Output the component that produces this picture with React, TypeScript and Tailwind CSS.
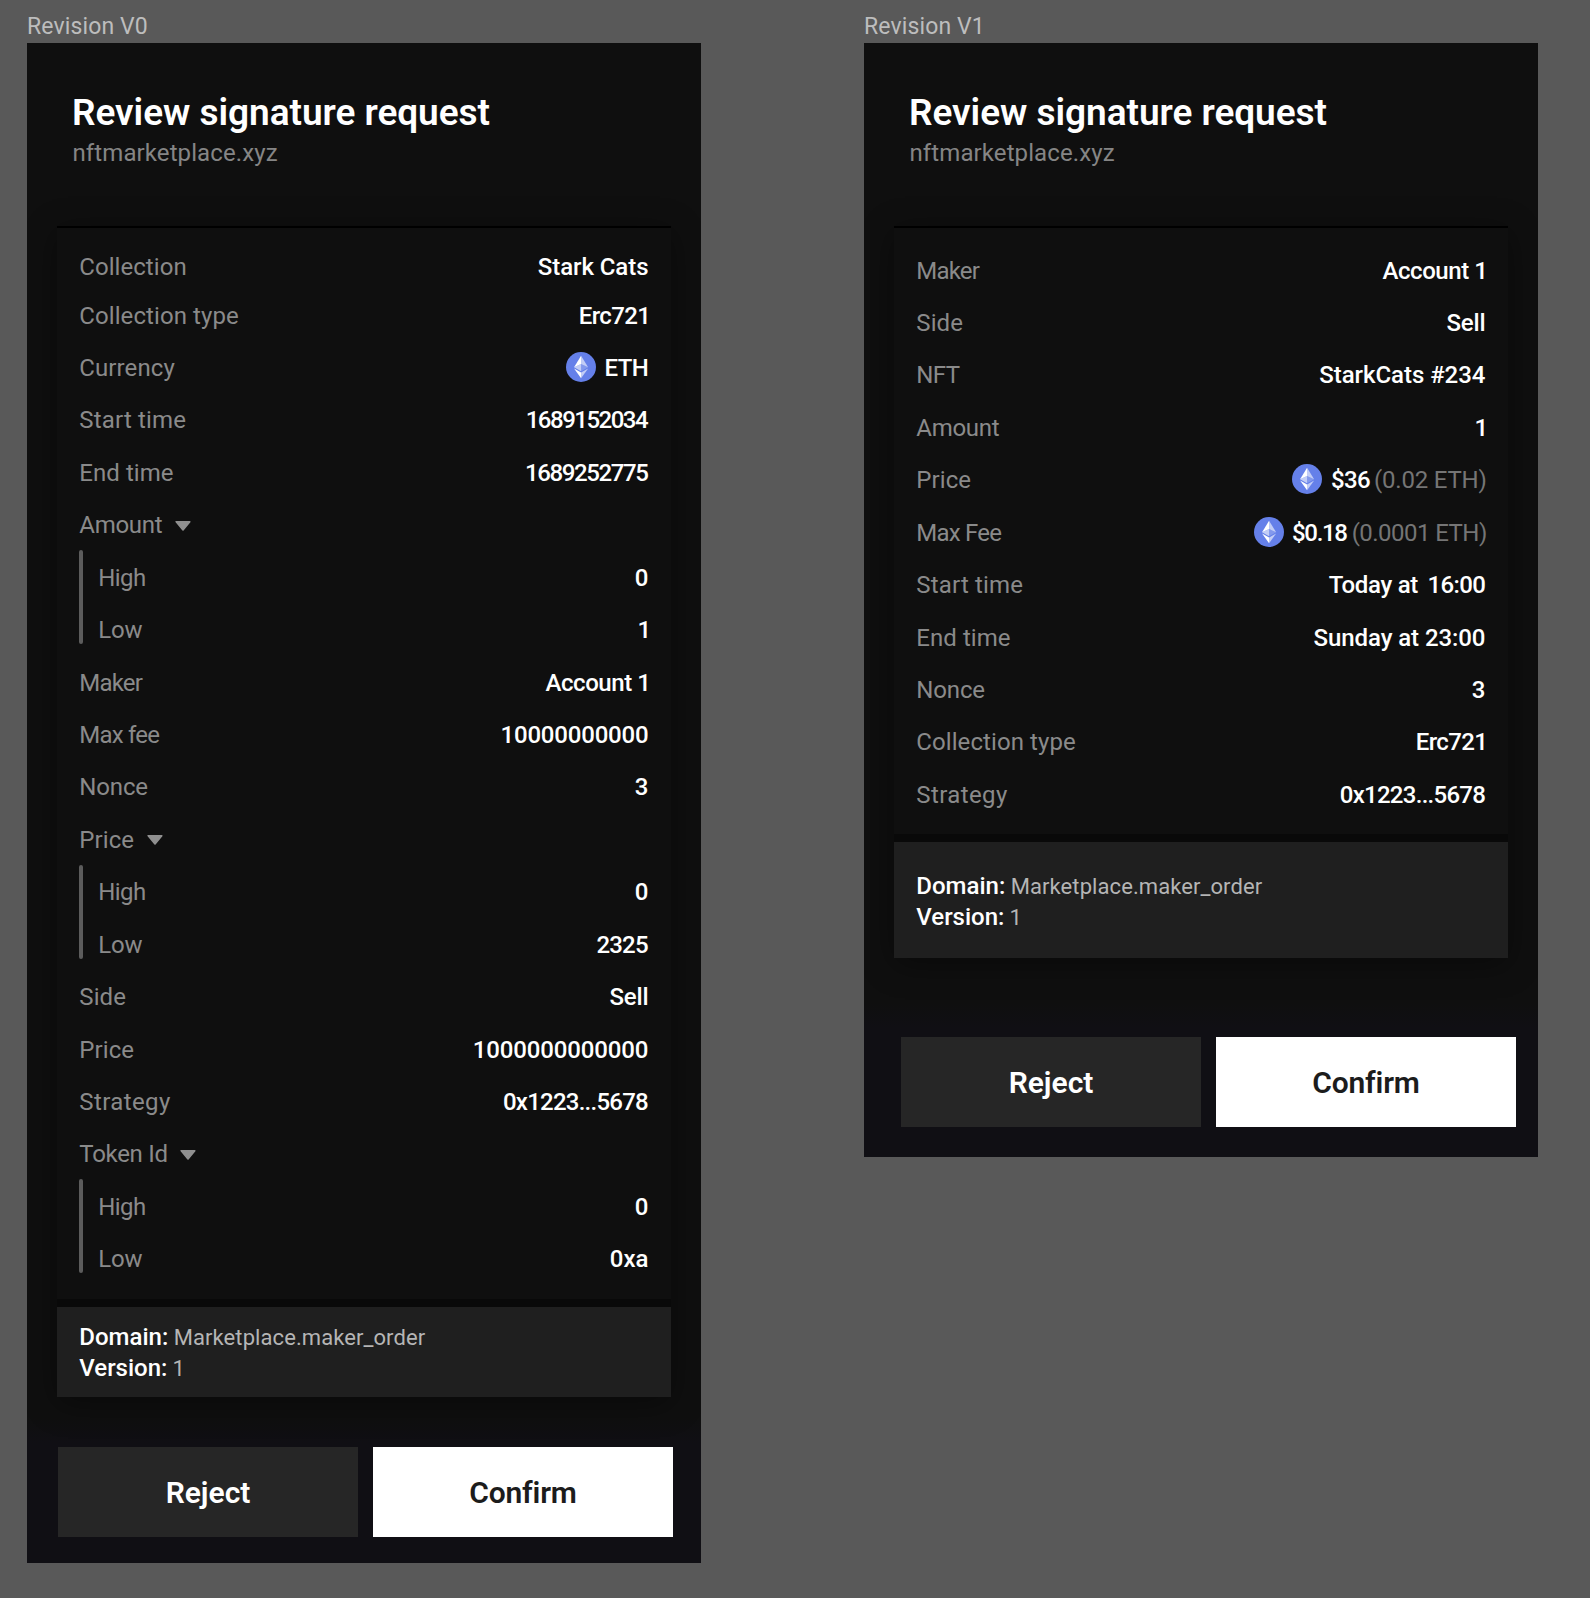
import type { ReactNode } from "react";

function EthIcon() {
  return (
    <svg viewBox="0 0 32 32" className="size-[30px] shrink-0 -translate-y-[1px]">
      <circle cx="16" cy="16" r="16" fill="#6580E9" />
      <g fill="#fff" transform="translate(-0.4 0)">
        <path fillOpacity=".602" d="M16.498 4v8.87l7.497 3.35z" />
        <path d="M16.498 4L9 16.22l7.498-3.35z" />
        <path fillOpacity=".602" d="M16.498 21.968v6.027L24 17.616z" />
        <path d="M16.498 27.995v-6.028L9 17.616z" />
        <path fillOpacity=".2" d="M16.498 20.573l7.497-4.353-7.497-3.348z" />
        <path fillOpacity=".602" d="M9 16.22l7.498 4.353v-7.701z" />
      </g>
    </svg>
  );
}

function Caret() {
  return (
    <svg viewBox="0 0 16 11" className="ml-[12.3px] h-[11px] w-4 translate-y-[0.5px]">
      <path
        d="M1.2 1.2h13.6L8 9.4z"
        fill="#8f8f8f"
        stroke="#8f8f8f"
        strokeWidth="1.6"
        strokeLinejoin="round"
      />
    </svg>
  );
}

type RowProps = {
  label: string;
  tracking?: string;
  height?: string;
  children?: ReactNode;
};

function Row({ label, tracking = "", height = "h-[52.43px]", children }: RowProps) {
  return (
    <div className={`flex items-center justify-between whitespace-pre ${height}`}>
      <span className={`text-[#8a8a8a] ${tracking}`}>{label}</span>
      <div className="flex items-center font-[470]">{children}</div>
    </div>
  );
}

function GroupTitle({ label, tracking }: { label: string; tracking: string }) {
  return (
    <div className="flex h-[52.43px] items-center text-[#8a8a8a]">
      <span className={tracking}>{label}</span>
      <Caret />
    </div>
  );
}

function Group({ high, low }: { high: ReactNode; low: ReactNode }) {
  return (
    <div className="flex">
      <div className="-mt-[1.4px] h-[94px] w-1 shrink-0 rounded-full bg-[#5c5c5c]" />
      <div className="ml-[15px] flex-1">
        <Row label="High" tracking="tracking-[-0.61px]">{high}</Row>
        <Row label="Low" tracking="tracking-[-0.2px]">{low}</Row>
      </div>
    </div>
  );
}

type CardProps = {
  name: string;
  cardHeight: string;
  panelHeight: string;
  domainBox: string;
  actions: string;
  footer: string;
  children: ReactNode;
};

function Card({ name, cardHeight, panelHeight, domainBox, actions, footer, children }: CardProps) {
  return (
    <section className="w-[674px] shrink-0">
      <div className="h-[43px] pt-[6.5px] text-[23px] leading-[40px] tracking-[0.12px] text-[#bdbdbd]">
        {name}
      </div>
      <div className={`flex flex-col overflow-hidden bg-[#0f0f0f] ${cardHeight} ${footer}`}>
        <header className="h-[183px] shrink-0 pl-[45px] pt-[50.4px] leading-[40px]">
          <h1 className="text-[37px] font-[580] leading-[40px] tracking-[-0.04px] text-white">
            Review signature request
          </h1>
          <p className="pl-[0.5px] text-[24px] tracking-[0.1px] text-[#858585]">nftmarketplace.xyz</p>
        </header>
        <div className="mx-[30px] flex w-[614px] shrink-0 flex-col gap-2 bg-[#090909] shadow-[0_6px_30px_rgba(0,0,0,0.4)]">
          <div
            className={`border-t-2 border-black bg-[#0f0f0f] pl-[22.3px] pr-[22.6px] pt-[16.4px] ${panelHeight}`}
          >
            {children}
          </div>
          <div className={`bg-[#1f1f1f] pl-[22.3px] leading-[30px] ${domainBox}`}>
            <div className="flex items-baseline">
              <span className="font-[470]">Domain:</span>
              <span className="ml-[5.5px] text-[22px] tracking-[0.08px] text-[#b5b5b5]">
                Marketplace.maker_order
              </span>
            </div>
            <div className="flex items-baseline">
              <span className="font-[470]">Version:</span>
              <span className="ml-[5px] text-[22px] text-[#b5b5b5]">1</span>
            </div>
          </div>
        </div>
        <div className={`flex shrink-0 gap-[15px] text-[30px] font-[580] ${actions}`}>
          <button className="h-[90px] w-[300px] bg-[#262626] pt-[2px] text-white">Reject</button>
          <button className="h-[90px] w-[300px] bg-white pt-[2px] tracking-[-0.2px] text-[#1c1c1c]">Confirm</button>
        </div>
      </div>
    </section>
  );
}

function RevisionV0() {
  return (
    <Card
      name="Revision V0"
      cardHeight="h-[1520px]"
      panelHeight="h-[1073px]"
      domainBox="h-[90px] pt-[15px]"
      actions="mt-[50px] ml-[31px]"
      footer="bg-[linear-gradient(to_bottom,transparent_1375px,#100f14_1400px)]"
    >
      <Row label="Collection" tracking="tracking-[0.05px]" height="h-[45px]">
        <span className="tracking-[-0.08px]">Stark Cats</span>
      </Row>
      <Row label="Collection type" tracking="tracking-[0.08px]">
        <span className="-mr-[2px] tracking-[-0.6px]">Erc721</span>
      </Row>
      <Row label="Currency" tracking="tracking-[0.1px]">
        <EthIcon />
        <span className="ml-[8.5px] tracking-[-0.5px]">ETH</span>
      </Row>
      <Row label="Start time" tracking="tracking-[0.18px]">
        <span className="mr-[1.3px] tracking-[-1.5px]">1689152034</span>
      </Row>
      <Row label="End time" tracking="tracking-[0.05px]">
        <span className="mr-[1px] tracking-[-1.4px]">1689252775</span>
      </Row>
      <GroupTitle label="Amount" tracking="tracking-[-0.3px]" />
      <Group high="0" low={<span className="-mr-[2.8px]">1</span>} />
      <Row label="Maker" tracking="tracking-[-0.8px]">
        <span className="-mr-[2px] tracking-[-0.45px]">Account 1</span>
      </Row>
      <Row label="Max fee" tracking="tracking-[-0.8px]">
        <span className="tracking-[-0.2px]">10000000000</span>
      </Row>
      <Row label="Nonce" tracking="tracking-[-0.16px]">3</Row>
      <GroupTitle label="Price" tracking="tracking-[0.1px]" />
      <Group high="0" low={<span className="mr-[0.6px] tracking-[-0.8px]">2325</span>} />
      <Row label="Side" tracking="tracking-[0.1px]">
        <span className="tracking-[-0.15px]">Sell</span>
      </Row>
      <Row label="Price" tracking="tracking-[0.1px]">
        <span className="tracking-[-0.12px]">1000000000000</span>
      </Row>
      <Row label="Strategy" tracking="tracking-[0.4px]">
        <span className="mr-[0.4px] tracking-[-0.75px]">0x1223...5678</span>
      </Row>
      <GroupTitle label="Token Id" tracking="tracking-[-0.3px]" />
      <Group high="0" low="0xa" />
    </Card>
  );
}

function RevisionV1() {
  return (
    <Card
      name="Revision V1"
      cardHeight="h-[1114px]"
      panelHeight="h-[608px]"
      domainBox="h-[116px] pt-[29px]"
      actions="mt-[79px] ml-[37px]"
      footer="bg-[linear-gradient(to_bottom,transparent_960px,#100f14_985px)]"
    >
      <Row label="Maker" tracking="tracking-[-0.8px]">
        <span className="-mr-[2px] tracking-[-0.45px]">Account 1</span>
      </Row>
      <Row label="Side" tracking="tracking-[0.1px]">
        <span className="tracking-[-0.15px]">Sell</span>
      </Row>
      <Row label="NFT" tracking="tracking-[-0.6px]">
        <span className="tracking-[-0.04px]">StarkCats #234</span>
      </Row>
      <Row label="Amount" tracking="tracking-[-0.3px]">
        <span className="-mr-[2.8px]">1</span>
      </Row>
      <Row label="Price" tracking="tracking-[0.1px]">
        <EthIcon />
        <span className="ml-[8.5px] tracking-[-0.6px]">$36</span>
        <span className="-mr-[1.3px] ml-[4px] font-normal tracking-[-0.2px] text-[#757575]">(0.02 ETH)</span>
      </Row>
      <Row label="Max Fee" tracking="tracking-[-0.77px]">
        <EthIcon />
        <span className="ml-[8px] tracking-[-1.3px]">$0.18</span>
        <span className="-mr-[1.3px] ml-[5px] font-normal tracking-[-0.55px] text-[#757575]">(0.0001 ETH)</span>
      </Row>
      <Row label="Start time" tracking="tracking-[0.18px]">
        <span className="tracking-[-0.3px]">Today at</span>
        <span className="ml-[9.5px] tracking-[-0.6px]">16:00</span>
      </Row>
      <Row label="End time" tracking="tracking-[0.05px]">
        <span className="tracking-[-0.08px]">Sunday at 23:00</span>
      </Row>
      <Row label="Nonce" tracking="tracking-[-0.16px]">3</Row>
      <Row label="Collection type" tracking="tracking-[0.08px]">
        <span className="-mr-[2px] tracking-[-0.6px]">Erc721</span>
      </Row>
      <Row label="Strategy" tracking="tracking-[0.4px]">
        <span className="mr-[0.2px] tracking-[-0.72px]">0x1223...5678</span>
      </Row>
    </Card>
  );
}

export default function App() {
  return (
    <main className="flex h-[1598px] w-[1590px] items-start gap-[163px] overflow-hidden bg-[#595959] pl-[27px] font-['Roboto',sans-serif] text-[24px] leading-[32px] text-white">
      <RevisionV0 />
      <RevisionV1 />
    </main>
  );
}
